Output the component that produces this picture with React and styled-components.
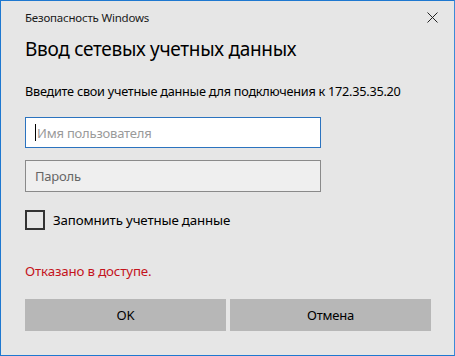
import React from "react";
import styled, { createGlobalStyle } from "styled-components";

const Global = createGlobalStyle`
    html, body { margin: 0; padding: 0; background: #e6e6e6; }
    * { box-sizing: border-box; }
`;

// окно диалога
const Window = styled.div`
    width: 455px;
    height: 356px;
    background: #e6e6e6;
    border: 1px solid #1e78d0;
    border-right-color: #3c8ad8;
    font-family: "Noto Sans", "Open Sans", sans-serif;
    color: #000;
    display: flex;
    flex-direction: column;
    padding: 0 0 0 24px;
`;

const TitleBar = styled.div`
    height: 32px;
    display: flex;
    align-items: center;
    justify-content: space-between;
    padding-right: 16px;
`;

const Caption = styled.span`
    font-size: 11.5px;
    color: #1a1a1a;
    letter-spacing: -0.2px;
`;

const Close = styled.svg`
    width: 11px;
    height: 11px;
`;

const Heading = styled.h1`
    margin: 3px 0 0;
    font-size: 19px;
    font-weight: 400;
    line-height: 26px;
    letter-spacing: -0.3px;
`;

const Lead = styled.p`
    margin: 20px 0 0;
    font-size: 12.7px;
    line-height: 18px;
    letter-spacing: -0.25px;
`;

const Field = styled.div`
    width: 296px;
    height: ${(p) => (p.$focused ? "31px" : "32px")};
    margin-top: ${(p) => p.$top}px;
    border: 1px solid ${(p) => (p.$focused ? "#2b73bf" : "#8a8a8a")};
    background: ${(p) => (p.$focused ? "#ffffff" : "#efefef")};
    display: flex;
    align-items: center;
    padding-left: 9px;
    font-size: 13px;
    letter-spacing: -0.2px;
    color: ${(p) => (p.$focused ? "#9a9a9a" : "#666")};
`;

const Caret = styled.span`
    width: 1px;
    height: 17px;
    background: #000;
    margin-right: 1px;
`;

const CheckRow = styled.label`
    margin-top: 18px;
    display: flex;
    align-items: center;
    gap: 8px;
    font-size: 13.3px;
    letter-spacing: -0.15px;
`;

const Box = styled.span`
    width: 20px;
    height: 20px;
    border: 2px solid #333;
    display: inline-block;
`;

const Error = styled.p`
    margin: 32px 0 0;
    font-size: 13.3px;
    line-height: 18px;
    letter-spacing: -0.15px;
    color: #c4141d;
`;

const Buttons = styled.div`
    margin-top: 19px;
    display: flex;
    gap: 4px;
`;

const Button = styled.button`
    width: 201px;
    height: 32px;
    border: none;
    background: #b7b7b7;
    font-family: inherit;
    font-size: 13px;
    letter-spacing: -0.2px;
    color: #000;
    padding: 0;
`;

export default function App() {
    return (
        <>
            <Global />
            <Window>
                <TitleBar>
                    <Caption>Безопасность Windows</Caption>
                    <Close viewBox="0 0 11 11">
                        <path d="M0.5 0.5 L10.5 10.5 M10.5 0.5 L0.5 10.5" stroke="#222" strokeWidth="1" />
                    </Close>
                </TitleBar>
                <Heading>Ввод сетевых учетных данных</Heading>
                <Lead>Введите свои учетные данные для подключения к 172.35.35.20</Lead>
                <Field $focused $top={17}>
                    <Caret />
                    Имя пользователя
                </Field>
                <Field $top={12}>Пароль</Field>
                <CheckRow>
                    <Box />
                    Запомнить учетные данные
                </CheckRow>
                <Error>Отказано в доступе.</Error>
                <Buttons>
                    <Button>OK</Button>
                    <Button>Отмена</Button>
                </Buttons>
            </Window>
        </>
    );
}
